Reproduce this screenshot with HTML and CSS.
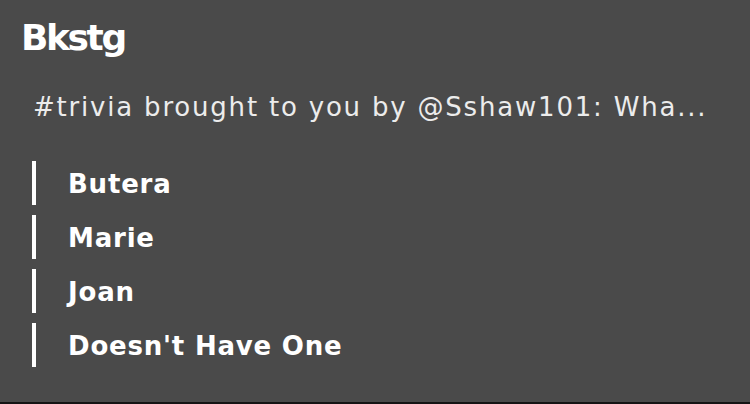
FILE: index.html
```html
<!DOCTYPE html>
<html>
<head>
<meta charset="utf-8">
<link rel="stylesheet" href="styles.css">
</head>
<body>
<div class="card">
  <div class="logo">Bkstg</div>
  <div class="question">#trivia brought to you by @Sshaw101: Wha...</div>
  <ul class="options">
    <li class="option">Butera</li>
    <li class="option">Marie</li>
    <li class="option">Joan</li>
    <li class="option">Doesn't Have One</li>
  </ul>
</div>
</body>
</html>
```
FILE: styles.css
```css
html, body {
  margin: 0;
  padding: 0;
  background: #4a4a4a;
}
.card {
  width: 750px;
  height: 402px;
  background: #4a4a4a;
  border-bottom: 2px solid #141414;
  font-family: "DejaVu Sans", "Liberation Sans", sans-serif;
  color: #f4f4f4;
  display: flex;
  flex-direction: column;
}
.logo {
  margin: 17px 0 0 21px;
  font-size: 36px;
  font-weight: 700;
  letter-spacing: -2.4px;
  line-height: 42px;
  color: #ffffff;
}
.question {
  margin: 32px 0 0 33px;
  font-size: 26px;
  line-height: 32px;
  color: #ececec;
  letter-spacing: 1.8px;
}
.options {
  list-style: none;
  margin: 38px 0 0 32px;
  padding: 0;
  display: flex;
  flex-direction: column;
  gap: 10px;
}
.option {
  height: 44px;
  border-left: 4px solid #ffffff;
  padding-left: 32px;
  display: flex;
  align-items: center;
  padding-top: 1px;
  box-sizing: border-box;
  font-size: 26px;
  font-weight: 700;
  letter-spacing: 0.8px;
  color: #ffffff;
}
```
